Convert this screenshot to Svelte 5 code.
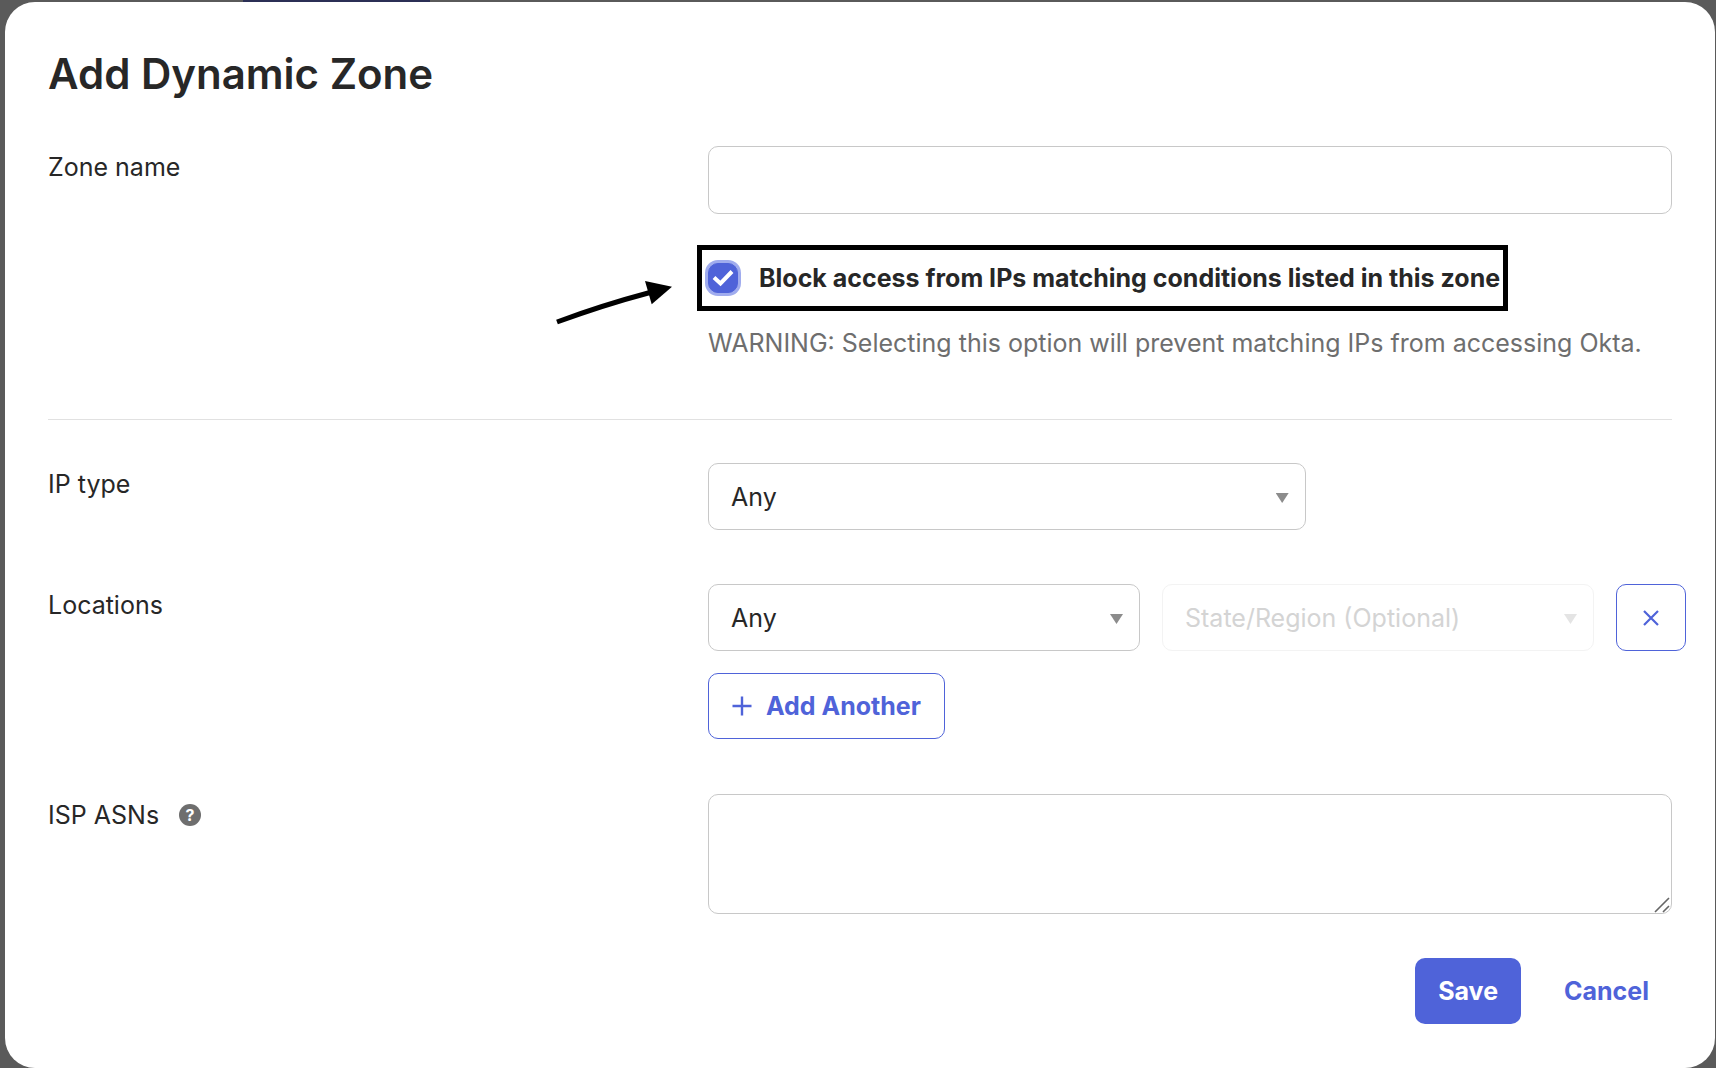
<script>
  let zoneName = '';
  let blockAccess = true;
  let ipType = 'any';
  let locations = [{ country: 'any', region: '' }];
  let asns = '';

  function addLocation() {
    locations = [...locations, { country: 'any', region: '' }];
  }

  function removeLocation(i) {
    locations = locations.filter((_, n) => n !== i);
  }
</script>

<div class="backdrop">
  <div class="nav-strip"></div>

  <form class="modal" on:submit|preventDefault>
    <h1>Add Dynamic Zone</h1>

    <div class="row">
      <label class="row-label" for="zone-name">Zone name</label>
      <div>
        <input id="zone-name" class="field" type="text" bind:value={zoneName} />
        <div class="block-option">
          <svg class="arrow" viewBox="0 0 118 46" aria-hidden="true">
            <path d="M1 42 Q47 25 94 12.5" fill="none" stroke="#000" stroke-width="5" />
            <path d="M89 1 L116 6.7 L95.7 24.3 Z" fill="#000" />
          </svg>
          <label class="check-label">
            <span class="check">
              <input type="checkbox" bind:checked={blockAccess} />
              <svg viewBox="0 0 30 30" aria-hidden="true">
                <path d="M6 14.5 L12.5 20.5 L24 8.5" fill="none" stroke="#fff" stroke-width="4" />
              </svg>
            </span>
            Block access from IPs matching conditions listed in this zone
          </label>
        </div>
        <p class="hint">WARNING: Selecting this option will prevent matching IPs from accessing Okta.</p>
      </div>
    </div>

    <hr />

    <div class="row">
      <label class="row-label" for="ip-type">IP type</label>
      <div class="select type-select">
        <select id="ip-type" class="field" bind:value={ipType}>
          <option value="any">Any</option>
        </select>
      </div>
    </div>

    <div class="row location-row">
      <label class="row-label" for="country-0">Locations</label>
      <div class="locations">
        {#each locations as location, i}
          <div class="location">
            <div class="select">
              <select id="country-{i}" class="field" bind:value={location.country}>
                <option value="any">Any</option>
              </select>
            </div>
            <div class="select disabled">
              <select class="field" aria-label="State/Region" bind:value={location.region} disabled>
                <option value="">State/Region (Optional)</option>
              </select>
            </div>
            <button type="button" class="btn outline" aria-label="Remove location" on:click={() => removeLocation(i)}>
              <svg width="16" height="16" viewBox="0 0 16 16">
                <path d="M1 1 L15 15 M15 1 L1 15" stroke="currentColor" stroke-width="2.2" />
              </svg>
            </button>
          </div>
        {/each}
        <button type="button" class="btn outline add" on:click={addLocation}>
          <svg width="20" height="20" viewBox="0 0 20 20">
            <path d="M10 0.5 V19.5 M0.5 10 H19.5" stroke="currentColor" stroke-width="2.4" />
          </svg>
          Add Another
        </button>
      </div>
    </div>

    <div class="row">
      <div class="row-label">
        <label for="asns">ISP ASNs</label>
        <button type="button" class="help" aria-label="Help">?</button>
      </div>
      <div class="area">
        <textarea id="asns" class="field" bind:value={asns}></textarea>
        <svg class="grip" viewBox="0 0 16 16" aria-hidden="true">
          <path d="M1 15 L15 1 M9 15 L15 9" stroke="#666" stroke-width="1.6" />
        </svg>
      </div>
    </div>

    <div class="actions">
      <button type="submit" class="btn primary">Save</button>
      <button type="button" class="btn">Cancel</button>
    </div>
  </form>
</div>

<style>
  :global(body) { background: #5a5a5a; }

  .backdrop {
    padding: 0 1px 1px 5px;
    font-family: Inter, 'Liberation Sans', sans-serif;
    font-size: 25px;
    line-height: 32px;
    color: #272727;
  }
  .backdrop * { box-sizing: border-box; }

  .nav-strip {
    width: 187px;
    height: 2px;
    margin-left: 238px;
    background: #2b2f55;
  }

  .modal {
    padding: 44px 43px;
    border-radius: 30px;
    background: #fff;
  }

  h1 {
    margin: 0 0 44px;
    font-size: 42px;
    line-height: 56px;
    font-weight: 600;
  }

  .row {
    display: grid;
    grid-template-columns: 165fr 241fr;
    align-items: start;
  }
  .row-label {
    display: flex;
    align-items: center;
    gap: 20px;
    padding-top: 5px;
  }
  .location-row { margin: 54px 0 55px; }

  .field {
    display: block;
    width: 100%;
    height: 68px;
    padding: 0 22px;
    border: 1px solid #c8c8c8;
    border-radius: 10px;
    background: #fff;
    color: inherit;
    font: inherit;
    appearance: none;
  }
  select.field { height: 67px; }

  .block-option {
    position: relative;
    display: inline-block;
    margin: 31px 0 16px -11px;
    border: 5px solid #000;
  }
  .arrow {
    position: absolute;
    right: 100%;
    top: 30px;
    width: 118px;
    height: 46px;
    margin-right: 28px;
  }
  .check-label {
    display: flex;
    align-items: center;
    gap: 21px;
    padding: 12px 3px 12px 6px;
    font-weight: 700;
  }
  .check {
    display: grid;
    width: 30px;
    height: 30px;
  }
  .check input,
  .check svg { grid-area: 1 / 1; width: 30px; height: 30px; margin: 0; }
  .check svg { display: none; pointer-events: none; }
  .check input {
    border: 1px solid #8c8c8c;
    border-radius: 10px;
    background: #fff;
    appearance: none;
  }
  .check input:checked {
    border-color: #4f63d9;
    background: #4f63d9;
    box-shadow: 0 0 0 3px #a0acee;
  }
  .check input:checked + svg { display: block; }

  .hint { margin: 0; color: #6e6e6e; }

  hr {
    margin: 60px 0 43px;
    border: 0;
    border-top: 1px solid #e1e1e1;
  }

  .select { position: relative; }
  .select::after {
    content: '';
    position: absolute;
    top: 30px;
    right: 17px;
    width: 13px;
    height: 10px;
    background: #8c8c8c;
    clip-path: polygon(0 0, 100% 0, 50% 100%);
    pointer-events: none;
  }
  .type-select { width: 62%; }
  .select.disabled::after { background: #e4e4e4; }
  .field:disabled { border-color: #f3f3f3; color: #d4d4d4; opacity: 1; }

  .locations { display: grid; gap: 22px; }
  .location {
    display: grid;
    grid-template-columns: 1fr 1fr 70px;
    gap: 22px;
    margin-right: -14px;
  }

  .btn {
    display: flex;
    align-items: center;
    justify-content: center;
    height: 66px;
    padding: 0 22px;
    border: 1px solid transparent;
    border-radius: 10px;
    background: #fff;
    color: #4f63d9;
    font: inherit;
    font-weight: 700;
    cursor: pointer;
  }
  .outline { border-color: #4f63d9; }
  .location .btn { height: 67px; }
  .add { justify-self: start; gap: 14px; padding: 0 23px; }
  .primary { background: #4f63d9; color: #fff; }

  .help {
    width: 22px;
    height: 22px;
    padding: 0;
    border: 0;
    border-radius: 50%;
    background: #6e6e6e;
    color: #fff;
    font: 700 16px/22px Inter, 'Liberation Sans', sans-serif;
  }

  .area { position: relative; }
  textarea.field { height: 120px; padding: 16px 22px; resize: none; }
  .grip {
    position: absolute;
    right: 2px;
    bottom: 1px;
    width: 16px;
    height: 16px;
  }

  .actions {
    display: flex;
    justify-content: flex-end;
    gap: 20px;
    margin-top: 44px;
  }
</style>
